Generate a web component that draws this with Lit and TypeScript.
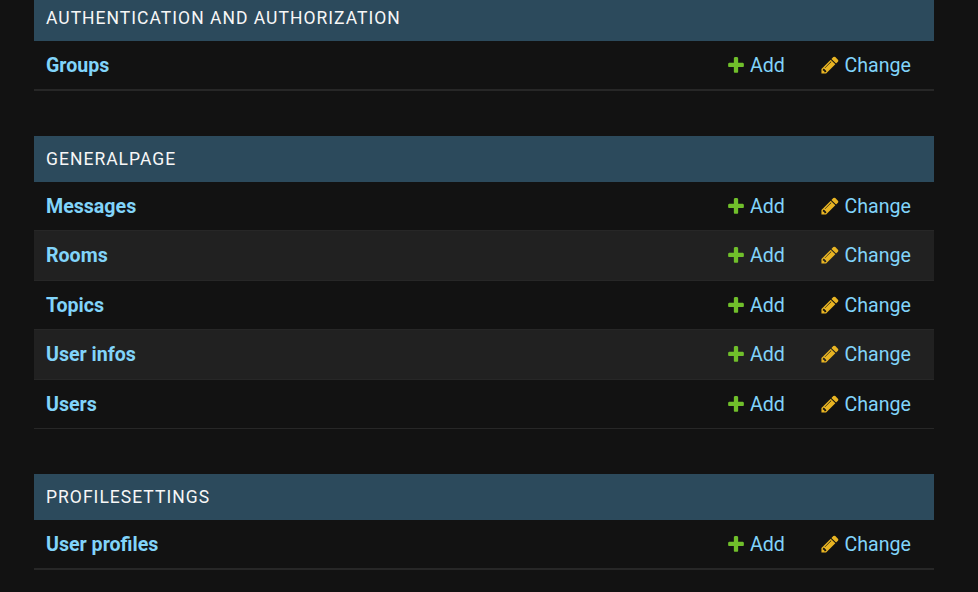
import { LitElement, css, html } from "lit";

const PLUS = "M1600 796v192q0 40-28 68t-68 28h-416v416q0 40-28 68t-68 28h-192q-40 0-68-28t-28-68v-416h-416q-40 0-68-28t-28-68v-192q0-40 28-68t68-28h416v-416q0-40 28-68t68-28h192q40 0 68 28t28 68v416h416q40 0 68 28t28 68z";
const PENCIL = "M491 1536l91-91-235-235-91 91v107h128v128h107zm523-928q0-22-22-22-10 0-17 7l-542 542q-7 7-7 17 0 22 22 22 10 0 17-7l542-542q7-7 7-17zm-54-192l416 416-832 832h-416v-416zm683 96q0 53-37 90l-166 166-416-416 166-165q36-38 90-38 53 0 91 38l235 234q37 39 37 91z";

const SECTIONS = [
  { title: "Authentication and Authorization", models: ["Groups"] },
  { title: "Generalpage", models: ["Messages", "Rooms", "Topics", "User infos", "Users"] },
  { title: "Profilesettings", models: ["User profiles"] },
];

export class AppRoot extends LitElement {
  static styles = css`
    :host {
      display: block;
      height: 592px;
      overflow: hidden;
      background: #121212;
      font-family: Roboto, "Liberation Sans", sans-serif;
      font-size: 19.6px;
      line-height: 24px;
    }

    .page {
      display: flex;
      flex-direction: column;
      gap: 45px;
      margin: -5px 44px 0 34px;
    }

    .caption {
      height: 46px;
      box-sizing: border-box;
      padding: 0 12px;
      display: flex;
      align-items: center;
      background: #2c4a5c;
      color: #f7f7f7;
      font-size: 17.5px;
      letter-spacing: 1.02px;
      text-transform: uppercase;
    }

    .row {
      height: 49.5px;
      box-sizing: border-box;
      display: grid;
      grid-template-columns: 1fr 93.5px 114.5px;
      align-items: center;
      padding-left: 12px;
      border-bottom: 1px solid #272727;
    }
    .row.alt { background: #212121; }
    .caption + .row:last-child { border-bottom-width: 2px; }

    a {
      color: #81d4fa;
      text-decoration: none;
      padding-top: 2px;
    }
    .name { font-weight: 700; }

    .action {
      display: flex;
      align-items: center;
      gap: 4px;
    }
    .change { gap: 5px; }
    svg {
      width: 20px;
      height: 20px;
      flex: none;
      margin-top: -2px;
    }
    .add svg { fill: #70bf2b; }
    .change svg { fill: #e8b423; }
  `;

  private action(kind: string, label: string, d: string) {
    return html`<a class="action ${kind}" href="#">
      <svg viewBox="0 0 1792 1792" aria-hidden="true"><path d=${d}></path></svg>${label}
    </a>`;
  }

  render() {
    return html`
      <div class="page">
        ${SECTIONS.map(
          (s) => html`
            <section>
              <div class="caption">${s.title}</div>
              ${s.models.map(
                (m, i) => html`
                  <div class="row ${i % 2 ? "alt" : ""}">
                    <a class="name" href="#">${m}</a>
                    ${this.action("add", "Add", PLUS)}
                    ${this.action("change", "Change", PENCIL)}
                  </div>
                `
              )}
            </section>
          `
        )}
      </div>
    `;
  }
}

customElements.define("app-root", AppRoot);
